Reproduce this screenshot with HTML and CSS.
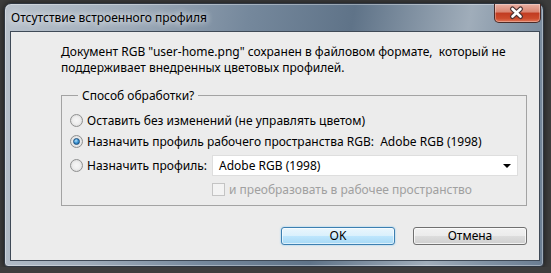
FILE: index.html
```html
<!DOCTYPE html>
<html lang="ru">
<head>
  <meta charset="UTF-8" />
  <title>Отсутствие встроенного профиля</title>
  <link rel="stylesheet" href="styles.css">
</head>
<body>

  <div class="window">
    <div class="titlebar">
      <span class="title">Отсутствие встроенного профиля</span>
      <button class="close" aria-label="Закрыть">
        <svg width="47" height="19" viewBox="0 0 47 19">
          <path d="M19.5 5 L27.5 12.5 M27.5 5 L19.5 12.5" stroke="#4a3030" stroke-width="5" stroke-linecap="round" fill="none" />
          <path d="M19.5 5 L27.5 12.5 M27.5 5 L19.5 12.5" stroke="#ffffff" stroke-width="2.6" stroke-linecap="round" fill="none" />
        </svg>
      </button>
    </div>

    <div class="client">
      <p class="message">Документ RGB "user-home.png" сохранен в файловом формате,&nbsp; который не<br>поддерживает внедренных цветовых профилей.</p>

      <div class="group">
        <span class="legend">Способ обработки?</span>
        <label class="option"><span class="radio"></span>Оставить без изменений (не управлять цветом)</label>
        <label class="option"><span class="radio checked"></span>Назначить профиль рабочего пространства RGB:&nbsp; Adobe RGB (1998)</label>
        <div class="option-row">
          <label class="option fixed"><span class="radio"></span>Назначить профиль:</label>
          <div class="select"><span>Adobe RGB (1998)</span><span class="arrow"></span></div>
        </div>
        <label class="check disabled"><span class="box"></span>и преобразовать в рабочее пространство</label>
      </div>

      <div class="buttons">
        <button class="btn default">OK</button>
        <button class="btn">Отмена</button>
      </div>
    </div>
  </div>

</body>
</html>
```

FILE: styles.css
```css
body {
  margin: 0;
  background: #3d3d3d;
  font-family: 'Noto Sans', 'Open Sans', sans-serif;
  font-size: 12px;
  color: #000000;
}
.window {
  margin: 3px 0 0 4px;
  width: 540px;
  height: 264px;
  box-sizing: border-box;
  border: 1px solid #2f3742;
  border-radius: 7px 7px 4px 4px;
  background: linear-gradient(100deg, #b9c2cc 0%, #9eabb9 22%, #75889c 42%, #5f7388 60%, #a0adba 80%, #8192a4 90%, #6a7d92 100%);
  box-shadow: 0 0 6px rgba(0, 0, 0, 0.6), inset 0 0 0 1px rgba(255, 255, 255, 0.35);
  display: flex;
  flex-direction: column;
}
.titlebar {
  height: 27px;
  display: flex;
  justify-content: space-between;
  align-items: flex-start;
  padding: 0 2px 0 6px;
}
.title {
  margin-top: 6px;
  line-height: 15px;
  text-shadow: 0 0 6px rgba(255, 255, 255, 0.9), 0 0 10px rgba(255, 255, 255, 0.6);
}
.close {
  width: 47px;
  height: 19px;
  padding: 0;
  border: 1px solid #4b2b28;
  border-top: none;
  border-radius: 0 0 5px 5px;
  background: linear-gradient(#eab0a3 0%, #d98571 45%, #c13b21 50%, #cc4b2c 80%, #e2775a 100%);
  box-shadow: inset 0 0 0 1px rgba(255, 255, 255, 0.3);
  display: flex;
  align-items: center;
  justify-content: center;
}
.close svg {
  display: block;
  margin-left: -2px;
}
.client {
  flex: 1;
  margin: 0 3px 5px 5px;
  background: #ececec;
  border: 1px solid #3f4a57;
  display: flex;
  flex-direction: column;
}
.message {
  margin: 12px 0 0 50px;
  line-height: 16px;
  white-space: nowrap;
}
.group {
  position: relative;
  margin: 19px 0 0 50px;
  width: 466px;
  height: 111px;
  box-sizing: border-box;
  border: 1px solid #a3a3a3;
  padding: 14px 0 0 8px;
  display: flex;
  flex-direction: column;
}
.legend {
  position: absolute;
  top: -8px;
  left: 16px;
  padding: 0 4px;
  line-height: 15px;
  background: #ececec;
}
.option {
  display: flex;
  align-items: center;
  height: 21px;
  white-space: nowrap;
}
.option-row {
  display: flex;
  align-items: center;
  margin-top: 3px;
}
.option.fixed {
  width: 142px;
}
.radio {
  position: relative;
  flex: none;
  width: 13px;
  height: 13px;
  box-sizing: border-box;
  margin-right: 4px;
  border-radius: 50%;
  border: 1px solid #8f9090;
  background: radial-gradient(circle, #f6f6f6 0%, #eeeeee 45%, #cfcfcf 100%);
}
.radio.checked::after {
  content: "";
  position: absolute;
  left: 2px;
  top: 2px;
  width: 7px;
  height: 7px;
  box-sizing: border-box;
  border-radius: 50%;
  border: 1px solid #1d4f7c;
  background: radial-gradient(circle at 40% 35%, #b5e2fa 0%, #3a92d2 50%, #1b5f99 100%);
}
.select {
  width: 306px;
  height: 21px;
  box-sizing: border-box;
  border: 1px solid #dedede;
  background: #ffffff;
  padding: 0 6px;
  display: flex;
  align-items: center;
  justify-content: space-between;
}
.arrow {
  width: 0;
  height: 0;
  border-left: 4px solid transparent;
  border-right: 4px solid transparent;
  border-top: 4px solid #000000;
}
.check {
  display: flex;
  align-items: center;
  height: 13px;
  margin: 7px 0 0 142px;
  white-space: nowrap;
}
.check .box {
  flex: none;
  width: 13px;
  height: 13px;
  box-sizing: border-box;
  margin-right: 4px;
  border: 1px solid #c4c4c4;
  background: #f3f3f3;
}
.check.disabled {
  color: #a0a0a0;
}
.buttons {
  display: flex;
  justify-content: flex-end;
  gap: 18px;
  margin-top: 21px;
  padding-right: 12px;
}
.btn {
  width: 114px;
  height: 18px;
  padding: 0;
  border: 1px solid #707070;
  border-radius: 3px;
  font: inherit;
  line-height: 14px;
  color: #000000;
  background: linear-gradient(#f2f2f2 0%, #ebebeb 50%, #dddddd 50%, #cfcfcf 100%);
  box-shadow: inset 0 0 0 1px rgba(255, 255, 255, 0.7);
}
.btn.default {
  border-color: #3c7fb1;
  background: linear-gradient(#eaf6fd 0%, #d9f0fc 50%, #bee6fd 50%, #a7d9f5 100%);
  box-shadow: inset 0 0 0 1px rgba(255, 255, 255, 0.6), 0 0 2px #7ec4f0;
}
```
